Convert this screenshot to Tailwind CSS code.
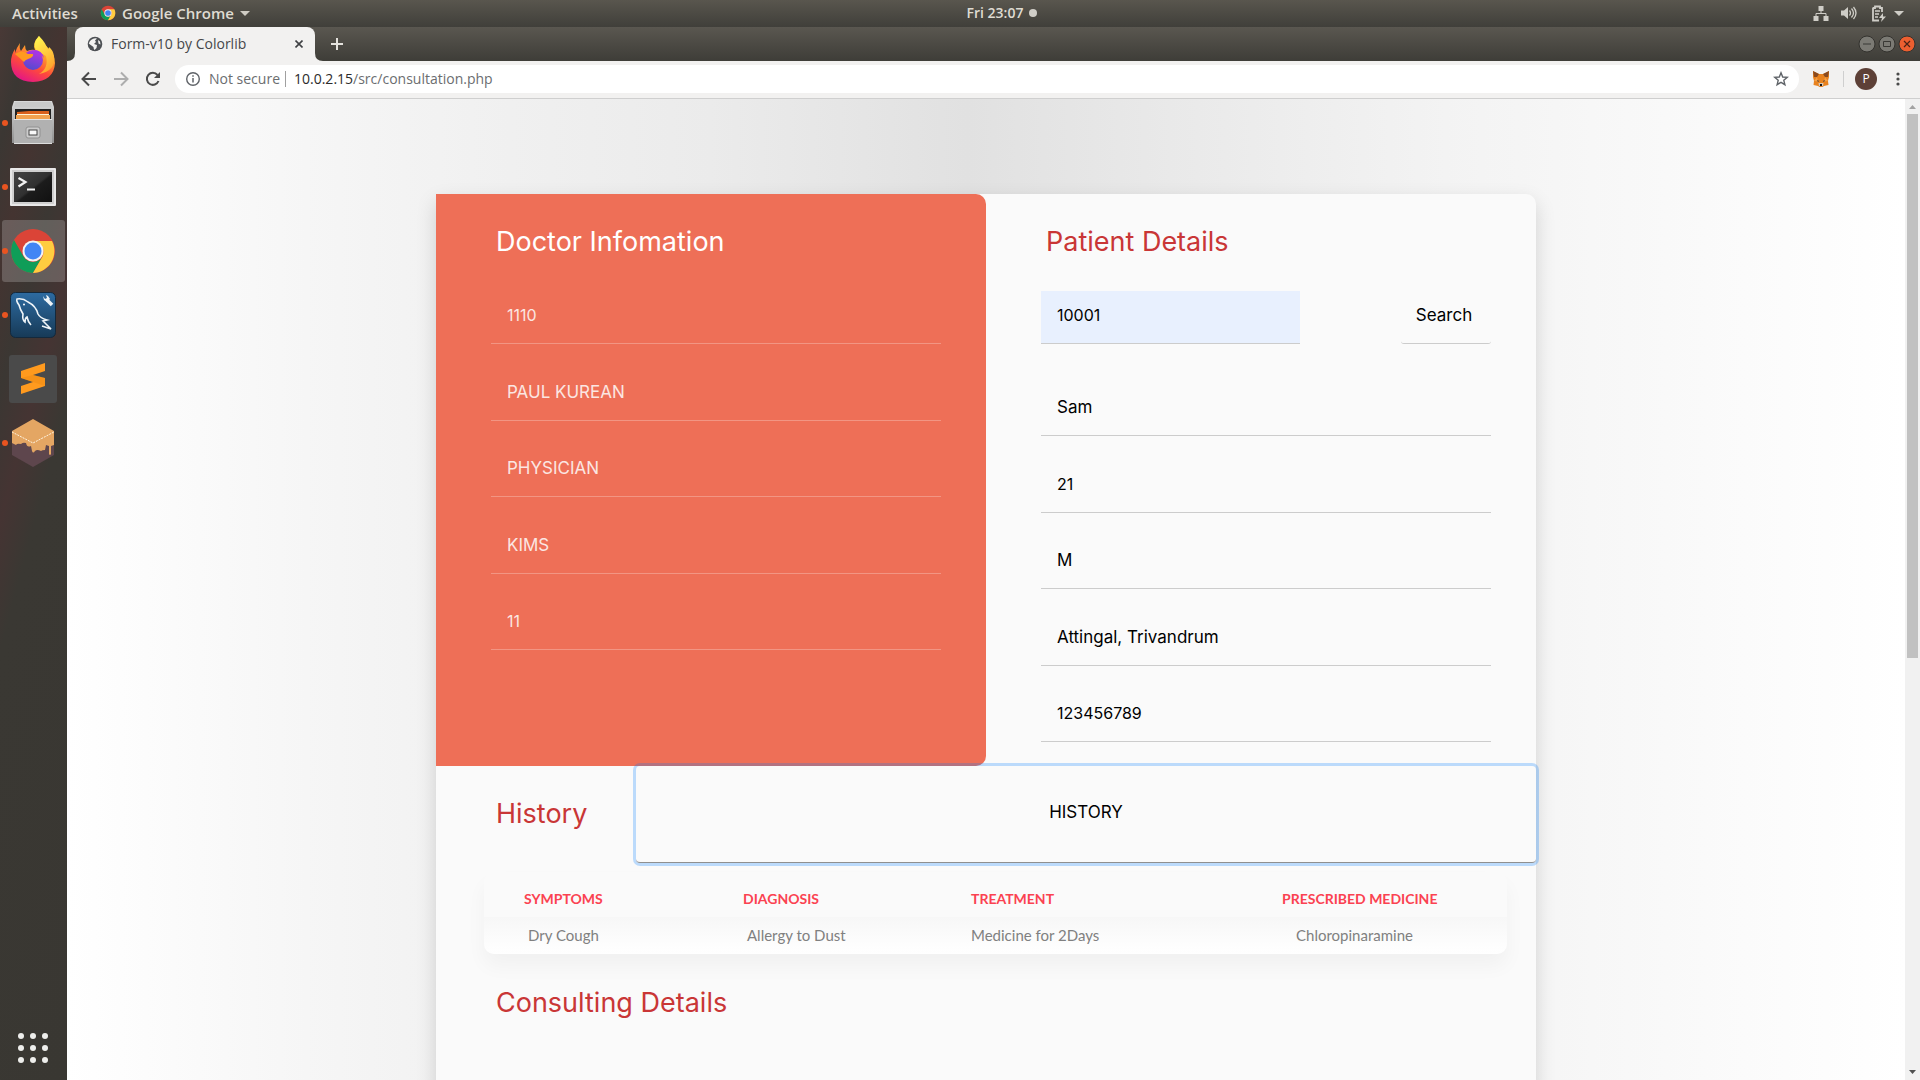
<!DOCTYPE html>
<html lang="en">
<head>
<meta charset="utf-8">
<meta name="viewport" content="width=device-width, initial-scale=1">
<title>Form-v10 by Colorlib</title>
<script src="https://cdn.jsdelivr.net/npm/@tailwindcss/browser@4"></script>
</head>
<body class="flex h-screen flex-col overflow-hidden bg-[#3a3833] font-['Open_Sans',sans-serif]">

<!-- System bar -->
<header class="grid h-[27px] shrink-0 grid-cols-[1fr_auto_1fr] items-center bg-linear-to-b from-[#59564e] to-[#403f3a] pb-px text-[14px] leading-5 font-semibold text-[#dfdbd2]">
  <div class="flex items-center pl-3 text-[15px]">
    <button class="w-[68px] text-left">Activities</button>
    <button class="flex items-center pl-5">
      <svg class="size-4" viewBox="0 0 48 48"><circle cx="24" cy="24" r="22" fill="#db4437"/><path d="M5 13A22 22 0 0 0 24 46L33.500 29.500A11 11 0 0 1 14.500 29.500Z" fill="#0f9d58"/><path d="M24 46A22 22 0 0 0 43 13H24A11 11 0 0 1 33.500 29.500Z" fill="#ffcd40"/><circle cx="24" cy="24" r="11" fill="#f1f1f1"/><circle cx="24" cy="24" r="8.500" fill="#4285f4"/></svg>
      <span class="pl-1.5">Google Chrome</span>
      <svg class="ml-1.5 h-[5px] w-2.5" viewBox="0 0 10 5"><path d="M0 0h10L5 5z" fill="#cfccc4"/></svg>
    </button>
  </div>
  <button class="ml-[84px] flex items-center gap-1.5">Fri 23:07<span class="size-2 rounded-full bg-[#d0cec8]"></span></button>
  <div class="flex items-center justify-end pr-4 text-[#cfcdc7]">
    <svg class="h-4 w-4" viewBox="0 0 16 16" fill="currentColor"><path d="M5.500 1h5v5h-5zM.5 11h5v5h-5zM10.500 11h5v5h-5z"/><path d="M8 5v3.500M3 11V8.500h10V11" fill="none" stroke="currentColor"/></svg>
    <svg class="ml-3 h-4 w-4" viewBox="0 0 16 16" fill="currentColor"><path d="M0 5.500h3L7 2v12l-4-3.500H0z"/><path d="M8.500 5.500q2 2.500 0 5M10.500 3.500q4 4.500 0 9M12.500 2q5 6 0 12" fill="none" stroke="currentColor" stroke-width="1.300"/></svg>
    <svg class="ml-3.5 h-[17px] w-[15px]" viewBox="0 0 15 17"><path d="M2 3h2V1.500h5V3h2v4M2 2.500v13h6" fill="none" stroke="currentColor" stroke-width="1.800"/><path d="M4 6h5M4 9h4M4 12h3" stroke="currentColor" stroke-width="1.500"/><path d="M12 8l-4 5h3l-1 4 5-5.500h-3z" fill="currentColor"/></svg>
    <svg class="ml-2 h-[5px] w-2.5" viewBox="0 0 10 5"><path d="M0 0h10L5 5z" fill="currentColor"/></svg>
  </div>
</header>

<div class="flex min-h-0 flex-1">

  <!-- Dock -->
  <nav aria-label="Dock" class="flex w-[67px] shrink-0 flex-col bg-[linear-gradient(105deg,#493936_0%,#3b3733_9%,#443431_18%,#3b3733_28%,#453433_38%,#3a3833_48%,#393732_100%)] pr-0.5">
    <button aria-label="Firefox" class="grid h-16 place-items-center">
      <svg class="size-[46px]" viewBox="0 0 46 46">
        <defs>
          <linearGradient id="ffa" x1=".8" y1="0" x2=".3" y2="1"><stop offset="0" stop-color="#fff44f"/><stop offset=".35" stop-color="#ffa52a"/><stop offset=".65" stop-color="#ff4b3a"/><stop offset="1" stop-color="#e31587"/></linearGradient>
          <linearGradient id="ffb" x1=".6" y1="0" x2=".3" y2="1"><stop offset="0" stop-color="#b833e1"/><stop offset="1" stop-color="#4f4bd0"/></linearGradient>
          <linearGradient id="ffc" x1=".4" y1="0" x2=".8" y2="1"><stop offset="0" stop-color="#fff14d"/><stop offset="1" stop-color="#ff9a2b"/></linearGradient>
        </defs>
        <path d="M10 7q-1 5 1 8l4-6q0 4 2 6 5-2 8-1-3-7 4-14 1 5 6 9 10 8 10 18-1 18-22 19Q1 45 1 26q0-7 4-13v4q2-6 5-10z" fill="url(#ffa)"/>
        <path d="M29 0q-7 8-3 14l10 6q3 12-7 18 17-3 15-18-1-6-5-9 0 3-1 3-2-7-9-14z" fill="url(#ffc)"/>
        <circle cx="23" cy="24" r="10" fill="url(#ffb)"/>
        <path d="M5 18q7-5 13 0h5q1 3-5 5-3 1-4 3-3-3-9-8z" fill="#ff9a1f"/>
        <path d="M24 14q8 0 10 8-4-5-8-4z" fill="#a336e8"/>
      </svg>
    </button>
    <button aria-label="Files" class="relative grid h-16 place-items-center">
      <span class="absolute top-[29px] left-0.5 size-1.5 rounded-full bg-[#e95420]"></span>
      <svg class="h-11 w-[42px]" viewBox="0 0 42 44">
        <defs><linearGradient id="fla" x1="0" y1="0" x2="0" y2="1"><stop offset="0" stop-color="#d9d9d9"/><stop offset="1" stop-color="#8f8f8f"/></linearGradient></defs>
        <path d="M2 0h38l2 6v36H0V6z" fill="url(#fla)"/><path d="M3 1h36l1 5H2z" fill="#c9c9c9"/>
        <path d="M3 8h36v11H3z" fill="#222"/><path d="M5 11l12-1h20v8H5z" fill="#d9601c"/><path d="M4 14h34v5H4z" fill="#f2a24f"/><path d="M5 13.500h32" stroke="#fff3d6"/>
        <path d="M2 18h38v25H2z" fill="#b1b1b1"/><path d="M2 18.500h38" stroke="#e4e4e4"/><path d="M2 42.500h38" stroke="#ddd"/>
        <rect x="14" y="26" width="14" height="11" rx="2" fill="#ccc" stroke="#919191"/><rect x="17" y="29" width="8" height="5" fill="#f8f8f8" stroke="#444"/>
      </svg>
    </button>
    <button aria-label="Terminal" class="relative grid h-16 place-items-center">
      <span class="absolute top-[29px] left-0.5 size-1.5 rounded-full bg-[#e95420]"></span>
      <svg class="h-[38px] w-[46px]" viewBox="0 0 46 38">
        <defs><linearGradient id="tma" x1="0" y1="0" x2="1" y2="1"><stop offset="0" stop-color="#454545"/><stop offset=".5" stop-color="#303030"/><stop offset=".55" stop-color="#1c1c1c"/><stop offset="1" stop-color="#111"/></linearGradient></defs>
        <rect width="46" height="38" rx="1" fill="#e8e8e8"/><rect x="2" y="2" width="42" height="34" fill="#cfcfcf"/><rect x="4" y="4" width="38" height="30" fill="url(#tma)"/>
        <path d="M8.500 10l7 4-7 4.500" fill="none" stroke="#f2f2f2" stroke-width="2.200"/><path d="M17 21.500h8" stroke="#f2f2f2" stroke-width="2"/>
      </svg>
    </button>
    <button aria-label="Google Chrome" class="relative grid h-16 place-items-center">
      <span class="absolute inset-y-[1px] right-0 left-0.5 rounded-[3px] bg-white/20"></span>
      <span class="absolute top-[29px] left-0.5 size-1.5 rounded-full bg-[#e95420]"></span>
      <svg class="relative size-12" viewBox="0 0 48 48"><circle cx="24" cy="24" r="22" fill="#db4437"/><path d="M5 13A22 22 0 0 0 24 46L33.500 29.500A11 11 0 0 1 14.500 29.500Z" fill="#0f9d58"/><path d="M24 46A22 22 0 0 0 43 14H24A11 11 0 0 1 33.500 29.500Z" fill="#ffcd40"/><circle cx="24" cy="24" r="10.500" fill="#f4f4f4"/><circle cx="24" cy="24" r="8.500" fill="#4285f4"/></svg>
    </button>
    <button aria-label="MySQL Workbench" class="relative grid h-16 place-items-center">
      <span class="absolute top-[29px] left-0.5 size-1.5 rounded-full bg-[#e95420]"></span>
      <svg class="size-[46px]" viewBox="0 0 46 46">
        <defs><linearGradient id="mya" x1="0" y1="0" x2="0" y2="1"><stop offset="0" stop-color="#2d6ba1"/><stop offset="1" stop-color="#173a57"/></linearGradient></defs>
        <rect x=".5" y=".5" width="45" height="45" rx="5" fill="url(#mya)" stroke="#14293c"/>
        <path d="M21 33q-3-3-4-8-2 1-2 5-3-2-2-8-3-5-4-9-3-4-2-6 6-1 11 3 8 4 10 12 2 4 9 6l-4 1 8 8-9-3" fill="none" stroke="#eef4f8" stroke-width="1.600"/>
        <circle cx="14" cy="12.500" r="1" fill="#fff"/>
        <path d="M37 8l5 5" stroke="#eef4f8" stroke-width="3.500"/><path d="M33 4l1 4 3 2 3-3-2-3-2-1 1 3-2 1z" fill="#eef4f8"/>
      </svg>
    </button>
    <button aria-label="Sublime Text" class="grid h-16 place-items-center">
      <svg class="size-12" viewBox="0 0 48 48"><rect width="48" height="48" rx="3" fill="#4a4a4a"/><path d="M12 16l24-8v8l-12 4 12 3v8l-24 8v-8l12-4-12-4z" fill="#ff9a1e"/><path d="M24 20l12 3v8l-12-4-12-4z" fill="#e8870f" opacity=".4"/></svg>
    </button>
    <button aria-label="Ganache" class="relative grid h-16 place-items-center">
      <span class="absolute top-[29px] left-0.5 size-1.5 rounded-full bg-[#e95420]"></span>
      <svg class="h-12 w-[42px]" viewBox="0 0 42 48"><path d="M0 14L21 24l21-10v22L21 48 0 36z" fill="#5e464d"/><path d="M21 0l21 12v14l-3 1v8q-1 2-2 0v-8l-3-1-1 5q-3 0-4 1-4-2-6 0-2 3-3 0l-1-5q-4 2-5-3-3-1-5 1-4-1-5 1l-4-2V12z" fill="#e4a663"/><path d="M0 13l21 11 21-11" fill="none" stroke="#fff3df" stroke-dasharray="2 1"/></svg>
    </button>
    <button aria-label="Show Applications" class="mt-auto grid h-16 place-items-center">
      <svg class="size-8" viewBox="0 0 32 32" fill="#eeeeec"><circle cx="4" cy="4" r="3"/><circle cx="16" cy="4" r="3"/><circle cx="28" cy="4" r="3"/><circle cx="4" cy="16" r="3"/><circle cx="16" cy="16" r="3"/><circle cx="28" cy="16" r="3"/><circle cx="4" cy="28" r="3"/><circle cx="16" cy="28" r="3"/><circle cx="28" cy="28" r="3"/></svg>
    </button>
  </nav>

  <!-- Browser window -->
  <div class="flex min-w-0 flex-1 flex-col">

    <!-- Tab strip -->
    <div class="flex h-[34px] shrink-0 items-stretch bg-linear-to-b from-[#5a5750] to-[#3e3d38]">
      <svg class="mt-auto size-2" viewBox="0 0 8 8"><path d="M8 0v8H0Q8 8 8 0z" fill="#f2f1f0"/></svg>
      <div class="flex w-60 items-center rounded-t-lg bg-[#f2f1f0] pr-2 pl-3">
        <svg class="size-4" viewBox="0 0 16 16"><circle cx="8" cy="8" r="7.300" fill="#4d5054"/><path d="M4 4q3-2.500 6-1.500l-2 2 1 1.500-2 2 3 1-.5 3-2 2q-1-1-1-3L3 8.500 1.800 7.500Q2.500 5 4 4z" fill="#f2f1f0"/><path d="M11 4l2 1.500.5 3-2-1z" fill="#f2f1f0"/></svg>
        <span class="flex-1 pl-2 text-[14px] leading-5 text-[#45474a]">Form-v10 by Colorlib</span>
        <button aria-label="Close tab" class="grid size-4 place-items-center"><svg class="size-2" viewBox="0 0 8 8"><path d="M.5.5l7 7M7.500.5l-7 7" stroke="#3f4144" stroke-width="1.600"/></svg></button>
      </div>
      <svg class="mt-auto size-2" viewBox="0 0 8 8"><path d="M0 0v8h8Q0 8 0 0z" fill="#f2f1f0"/></svg>
      <button aria-label="New tab" class="grid w-7 place-items-center"><svg class="size-3" viewBox="0 0 12 12"><path d="M6 0v12M0 6h12" stroke="#e4e2dd" stroke-width="2"/></svg></button>
      <div class="ml-auto flex items-center gap-0.5 pr-1">
        <button aria-label="Minimize"><svg class="size-[18px]" viewBox="0 0 18 18"><circle cx="9" cy="9" r="8" fill="#7b7a74" stroke="#33322e"/><path d="M5 9h8" stroke="#393834"/></svg></button>
        <button aria-label="Maximize"><svg class="size-[18px]" viewBox="0 0 18 18"><circle cx="9" cy="9" r="8" fill="#7b7a74" stroke="#33322e"/><path d="M5.500 6.500h7v5h-7z" fill="none" stroke="#393834"/></svg></button>
        <button aria-label="Close"><svg class="size-[18px]" viewBox="0 0 18 18"><circle cx="9" cy="9" r="8" fill="#ec5f30" stroke="#33322e"/><path d="M6 6l6 6M12 6l-6 6" stroke="#4a2316" stroke-width="1.200"/></svg></button>
      </div>
    </div>

    <!-- Toolbar -->
    <div class="flex h-[38px] shrink-0 items-center border-b border-[#cfcfcf] bg-[#f2f1f0] px-3.5 pb-0.5 text-[14px] leading-5">
      <button aria-label="Back"><svg class="size-4" viewBox="0 0 16 16"><path d="M15 8H2M8 1.500L1.500 8 8 14.500" fill="none" stroke="#4a4a4a" stroke-width="2"/></svg></button>
      <button aria-label="Forward" class="ml-4"><svg class="size-4" viewBox="0 0 16 16"><path d="M1 8h13M8 1.500L14.500 8 8 14.500" fill="none" stroke="#adadad" stroke-width="2"/></svg></button>
      <button aria-label="Reload" class="ml-4"><svg class="size-4" viewBox="0 0 16 16"><path d="M13.500 10A6 6 0 1 1 12.500 4" fill="none" stroke="#4a4a4a" stroke-width="2"/><path d="M15 1v6H9z" fill="#4a4a4a"/></svg></button>
      <div class="ml-3.5 flex h-7 flex-1 items-center rounded-full bg-white px-2.5">
        <svg class="size-4" viewBox="0 0 16 16"><circle cx="8" cy="8" r="6.300" fill="none" stroke="#5f6368" stroke-width="1.400"/><path d="M8 7v4.500M8 4.300v1.500" stroke="#5f6368" stroke-width="1.500"/></svg>
        <span class="w-[75px] pl-2 whitespace-nowrap text-[#6b6d70]">Not secure</span>
        <span class="ml-[9px] h-4 w-px bg-[#a0a0a0]"></span>
        <a href="#" class="flex-1 pl-2 text-[#6b6d70]"><span class="text-[#2b2b2b]">10.0.2.15</span>/src/consultation.php</a>
        <button aria-label="Bookmark this page"><svg class="size-4" viewBox="0 0 16 16"><path d="M8 1.800l1.700 4.200 4.600.300-3.500 3 1.100 4.400L8 11.300l-3.900 2.400 1.100-4.400-3.500-3 4.600-.300z" fill="none" stroke="#5f6368" stroke-width="1.400"/></svg></button>
      </div>
      <button aria-label="MetaMask" class="ml-3.5"><svg class="size-4" viewBox="0 0 16 16"><path d="M0 0l6 3h4l6-3v6l-1 4 .5 4-4.500 1-1.500 1h-3L5 15 .5 14 1 10 0 6z" fill="#e8821e"/><path d="M0 0l6 3-2 3H1zM16 0l-6 3 2 3h3z" fill="#8a4a1f"/><path d="M4 6l-3 4 4 .500zM12 6l3 4-4 .500z" fill="#f6a045"/><path d="M4 9l2 1-1 1zM12 9l-2 1 1 1z" fill="#2b3340"/><path d="M5.500 12h5L10 15H6z" fill="#d7c8b8"/><path d="M7 13h2v2H7z" fill="#16181c"/></svg></button>
      <span class="ml-3.5 h-4 w-px bg-[#cfcfcf]"></span>
      <button aria-label="Profile" class="ml-[11px] grid size-[22px] place-items-center rounded-full bg-[#5d4037] text-[12px] leading-4 text-white">P</button>
      <button aria-label="Menu" class="ml-[13px]"><svg class="size-4" viewBox="0 0 16 16" fill="#4a4a4a"><circle cx="8" cy="3" r="1.600"/><circle cx="8" cy="8" r="1.600"/><circle cx="8" cy="13" r="1.600"/></svg></button>
    </div>

    <!-- Viewport -->
    <div class="flex min-h-0 flex-1">
      <main class="min-w-0 flex-1 overflow-hidden bg-[linear-gradient(to_right,#ffffff_0%,#f6f6f6_13%,#f1f1f1_22%,#ebebeb_35%,#e1e1e1_49%,#e9e9e9_60%,#f3f3f3_75%,#f9f9f9_87%,#ffffff_100%)] pt-[95px] font-['Inter',sans-serif]">
        <form class="mx-auto min-h-[1200px] w-full max-w-[1100px] rounded-tr-[10px] bg-[#fafafa] text-[17px] leading-6 text-black shadow-[0_8px_20px_0_rgba(0,0,0,0.15)]">
          <div class="grid grid-cols-2">
            <section class="rounded-r-[10px] bg-[#ee6f57] pr-[45px] pb-5 pl-[55px] text-[#fbe6e2]">
              <h2 class="flex h-[97px] items-center pb-0.5 pl-[5px] text-[27px] leading-8 text-white">Doctor Infomation</h2>
              <div class="flex h-[359px] flex-col justify-between">
                <input aria-label="Doctor ID" value="1110" class="h-[53px] w-full border-b border-[#f29583] px-4 pb-1 text-[16px] outline-none">
                <input aria-label="Doctor name" value="PAUL KUREAN" class="h-[53px] w-full border-b border-[#f29583] px-4 pb-1 outline-none">
                <input aria-label="Specialization" value="PHYSICIAN" class="h-[53px] w-full border-b border-[#f29583] px-4 pb-1 outline-none">
                <input aria-label="Hospital" value="KIMS" class="h-[53px] w-full border-b border-[#f29583] px-4 pb-1 outline-none">
                <input aria-label="Experience" value="11" class="h-[53px] w-full border-b border-[#f29583] px-4 pb-1 text-[16px] outline-none">
              </div>
            </section>
            <section class="pr-[45px] pb-6 pl-[55px]">
              <h2 class="flex h-[97px] items-center pb-0.5 pl-[5px] text-[27px] leading-8 text-[#c93636]">Patient Details</h2>
              <div class="mb-[39px] flex justify-between">
                <input aria-label="Patient ID" value="10001" class="h-[53px] w-[259px] border-b border-[#ccc] bg-[#e8f0fe] px-4 pb-1 text-[16px] outline-none">
                <button type="button" class="h-[53px] w-[90px] rounded-[3px] border-b border-[#ccc] pr-1 pb-1 text-center">Search</button>
              </div>
              <div class="flex h-[359px] flex-col justify-between">
                <input aria-label="Patient name" value="Sam" class="h-[53px] w-full border-b border-[#ccc] px-4 pb-1 outline-none">
                <input aria-label="Age" value="21" class="h-[53px] w-full border-b border-[#ccc] px-4 pb-1 text-[16px] outline-none">
                <input aria-label="Sex" value="M" class="h-[53px] w-full border-b border-[#ccc] px-4 pb-1 outline-none">
                <input aria-label="Address" value="Attingal, Trivandrum" class="h-[53px] w-full border-b border-[#ccc] px-4 pb-1 outline-none">
                <input aria-label="Phone" value="123456789" class="h-[53px] w-full border-b border-[#ccc] px-4 pb-1 text-[16px] outline-none">
              </div>
            </section>
          </div>

          <section>
            <div class="flex h-[97px]">
              <h2 class="flex w-[200px] items-center pb-0.5 pl-[60px] text-[27px] leading-8 text-[#c93636]">History</h2>
              <button type="button" class="relative flex-1 rounded-[4px] border-b border-[#8f8f8f] pb-1 shadow-[0_0_0_3px_rgba(0,123,255,0.25)]">HISTORY</button>
            </div>
            <div class="mt-[9px] mr-[29px] ml-12 overflow-hidden rounded-[10px] bg-[#fafafa] font-['Lato',sans-serif] shadow-[0_12px_20px_0_rgba(0,0,0,0.04)]">
              <table class="w-full table-fixed text-left">
                <thead class="text-[14px] leading-5 text-[#fa4251]">
                  <tr class="h-[45px]">
                    <th class="w-[219px] pt-2 pl-10 font-bold">SYMPTOMS</th>
                    <th class="w-[228px] pt-2 pl-10 font-bold">DIAGNOSIS</th>
                    <th class="w-[311px] pt-2 pl-10 font-bold">TREATMENT</th>
                    <th class="pt-2 pl-10 font-bold">PRESCRIBED MEDICINE</th>
                  </tr>
                </thead>
                <tbody class="text-[15px] leading-5 text-[#808080]">
                  <tr class="h-[37px] bg-linear-to-b from-[#f7f7f7] to-white">
                    <td class="pb-0.5 pl-11">Dry Cough</td>
                    <td class="pb-0.5 pl-11">Allergy to Dust</td>
                    <td class="pb-0.5 pl-10">Medicine for 2Days</td>
                    <td class="pb-0.5 pl-[54px]">Chloropinaramine</td>
                  </tr>
                </tbody>
              </table>
            </div>
          </section>

          <section>
            <h2 class="flex h-[97px] items-center pl-[60px] text-[27px] leading-8 text-[#c93636]">Consulting Details</h2>
          </section>
        </form>
      </main>

      <!-- Scrollbar -->
      <div class="flex w-[15px] shrink-0 flex-col items-center bg-[#f1f1f1]">
        <svg class="h-[15px] w-[15px]" viewBox="0 0 15 15"><path d="M7.500 6L11 10H4z" fill="#a3a3a3"/></svg>
        <div class="h-[544px] w-[11px] bg-[#c1c1c1]"></div>
        <svg class="mt-auto h-[15px] w-[15px]" viewBox="0 0 15 15"><path d="M4 5h7L7.500 9z" fill="#505050"/></svg>
      </div>
    </div>
  </div>
</div>
</body>
</html>
